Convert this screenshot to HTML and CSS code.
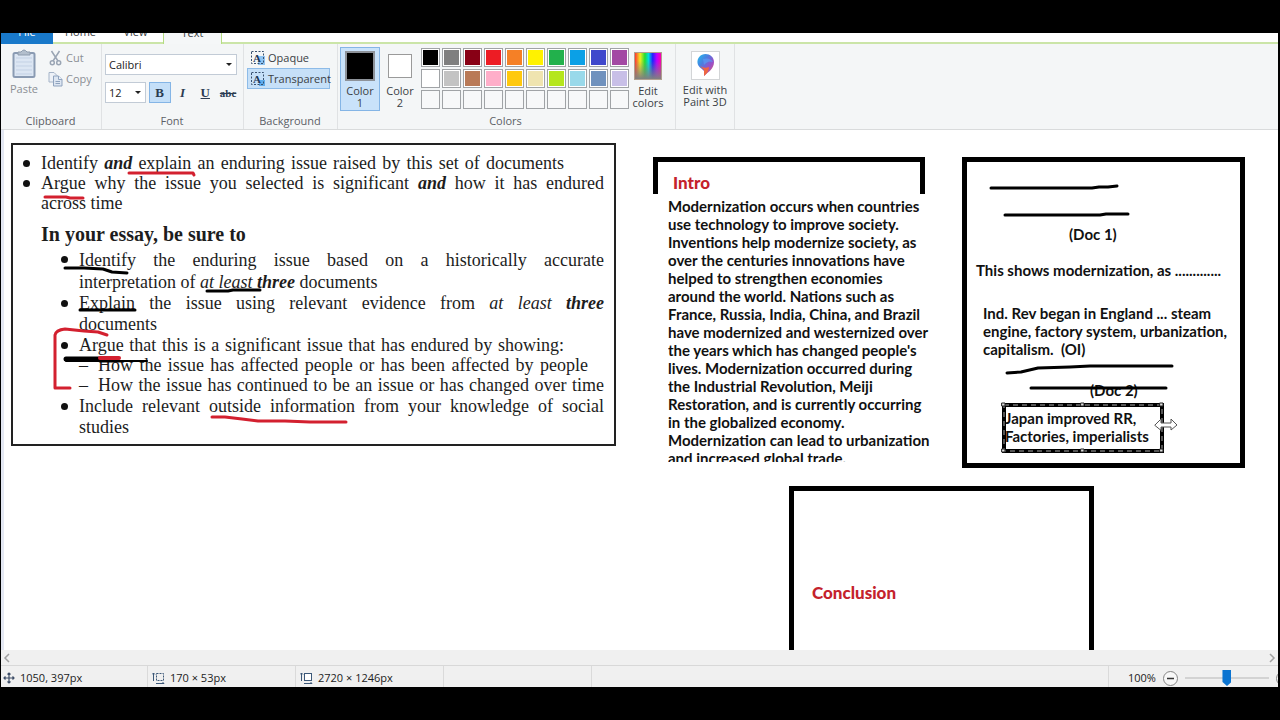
FILE: index.html
```html
<!DOCTYPE html>
<html lang="en">
<head>
<meta charset="utf-8">
<title>Paint</title>
<link rel="stylesheet" href="styles.css">
</head>
<body>
<div class="app">
  <nav class="tabs">
    <button class="tab tab-file">File</button>
    <button class="tab">Home</button>
    <button class="tab">View</button>
    <button class="tab tab-active">Text</button>
    <span class="tab-fill"></span>
  </nav>

  <header class="ribbon">
    <section class="group group-clipboard">
      <div class="group-body">
        <button class="tool tool-paste">
          <svg width="24" height="30" viewBox="0 0 24 30"><rect x="1.500" y="4" width="21" height="24" rx="1.500" fill="#dce6f3" stroke="#8a9bb3" stroke-width="2"/><path d="M4 9H20M4 13H20M4 17H20M4 21H20M4 25H20" stroke="#c3d1e4"/><path d="M6 6V3H9Q12 -1 15 3H18V6Z" fill="#b3bfcd" stroke="#8d9bad"/></svg>
          Paste
        </button>
        <div class="stack">
          <button class="tool tool-line">
            <svg width="12" height="16" viewBox="0 0 12 16" fill="none" stroke="#9aa5b4" stroke-width="1.500"><path d="M2 1L8.500 11M10 1L3.500 11"/><circle cx="2.800" cy="12.700" r="2"/><circle cx="9.200" cy="12.700" r="2"/></svg>
            Cut
          </button>
          <button class="tool tool-line">
            <svg width="15" height="16" viewBox="0 0 15 16" fill="#edf1f7" stroke="#a5b4c8"><path d="M1 1.500H6L9 4.500V11H1Z"/><path d="M5.500 5H10.500L14 8.500V15H5.500Z" fill="#dde6f2" stroke="#8fa3be"/><path d="M10.500 5V8.500H14M7.500 10.500H12M7.500 12.500H12" stroke="#8fa3be"/></svg>
            Copy
          </button>
        </div>
      </div>
      <h2 class="group-name">Clipboard</h2>
    </section>

    <section class="group group-font">
      <div class="group-body group-rows">
        <label class="picker"><select class="select" aria-label="Font family"><option>Calibri</option></select></label>
        <div class="font-row">
          <label class="picker picker-size"><select class="select" aria-label="Font size"><option>12</option></select></label>
          <button class="style-button style-on"><b>B</b></button>
          <button class="style-button"><i>I</i></button>
          <button class="style-button"><u>U</u></button>
          <button class="style-button style-strike"><s>abc</s></button>
        </div>
      </div>
      <h2 class="group-name">Font</h2>
    </section>

    <section class="group group-background">
      <div class="group-body group-rows group-tight">
        <button class="mode">
          <svg width="16" height="16" viewBox="0 0 16 16"><path d="M8 6H15V15H8Z" fill="#8fc4f2"/><rect x="1.500" y="1.500" width="12" height="12" fill="none" stroke="#38516f" stroke-dasharray="2 1.500"/><text x="3" y="12" class="icon-letter">A</text></svg>
          Opaque
        </button>
        <button class="mode mode-on">
          <svg width="16" height="16" viewBox="0 0 16 16"><path d="M9 9H15V15H9Z" fill="#5facec"/><rect x="1.500" y="1.500" width="12" height="12" fill="none" stroke="#38516f" stroke-dasharray="2 1.500"/><text x="3" y="12" class="icon-letter">A</text></svg>
          Transparent
        </button>
      </div>
      <h2 class="group-name">Background</h2>
    </section>

    <section class="group group-colors">
      <div class="group-body group-palette">
        <button class="slot slot-on"><span class="chip chip-large"></span><span>Color<br>1</span></button>
        <button class="slot"><span class="chip chip-small"></span><span>Color<br>2</span></button>
        <div class="palette">
          <button class="swatch" aria-label="Black" style="background-color:#000"></button>
          <button class="swatch" aria-label="Gray" style="background-color:#7f7f7f"></button>
          <button class="swatch" aria-label="Dark red" style="background-color:#880015"></button>
          <button class="swatch" aria-label="Red" style="background-color:#ed1c24"></button>
          <button class="swatch" aria-label="Orange" style="background-color:#f58026"></button>
          <button class="swatch" aria-label="Yellow" style="background-color:#fff200"></button>
          <button class="swatch" aria-label="Green" style="background-color:#22b14c"></button>
          <button class="swatch" aria-label="Turquoise" style="background-color:#0ba0e6"></button>
          <button class="swatch" aria-label="Indigo" style="background-color:#3f48cc"></button>
          <button class="swatch" aria-label="Purple" style="background-color:#a349a4"></button>
          <button class="swatch" aria-label="White" style="background-color:#fff"></button>
          <button class="swatch" aria-label="Light gray" style="background-color:#c3c3c3"></button>
          <button class="swatch" aria-label="Brown" style="background-color:#b97a57"></button>
          <button class="swatch" aria-label="Rose" style="background-color:#ffaec9"></button>
          <button class="swatch" aria-label="Gold" style="background-color:#ffc90e"></button>
          <button class="swatch" aria-label="Light yellow" style="background-color:#efe4b0"></button>
          <button class="swatch" aria-label="Lime" style="background-color:#b5e61d"></button>
          <button class="swatch" aria-label="Light turquoise" style="background-color:#99d9ea"></button>
          <button class="swatch" aria-label="Blue gray" style="background-color:#7092be"></button>
          <button class="swatch" aria-label="Lavender" style="background-color:#c8bfe7"></button>
          <button class="swatch swatch-empty" aria-label="Custom 1"></button>
          <button class="swatch swatch-empty" aria-label="Custom 2"></button>
          <button class="swatch swatch-empty" aria-label="Custom 3"></button>
          <button class="swatch swatch-empty" aria-label="Custom 4"></button>
          <button class="swatch swatch-empty" aria-label="Custom 5"></button>
          <button class="swatch swatch-empty" aria-label="Custom 6"></button>
          <button class="swatch swatch-empty" aria-label="Custom 7"></button>
          <button class="swatch swatch-empty" aria-label="Custom 8"></button>
          <button class="swatch swatch-empty" aria-label="Custom 9"></button>
          <button class="swatch swatch-empty" aria-label="Custom 10"></button>
        </div>
        <button class="slot slot-edit"><span class="rainbow"></span><span>Edit<br>colors</span></button>
      </div>
      <h2 class="group-name">Colors</h2>
    </section>

    <section class="group group-3d">
      <div class="group-body group-palette">
        <button class="slot slot-3d">
          <svg width="29" height="29" viewBox="0 0 29 29">
            <defs><linearGradient id="drop" x1="0" y1="0" x2="1" y2="1"><stop offset="0" stop-color="#1fc0ee"/><stop offset=".35" stop-color="#4a7fe0"/><stop offset=".65" stop-color="#9a4fc9"/><stop offset="1" stop-color="#f06a4a"/></linearGradient></defs>
            <rect x=".5" y=".5" width="28" height="28" fill="#fff" stroke="#d3d5d7"/>
            <path d="M14.500 3C9.500 3 6 7 6.500 12C7 16 10.500 17 13 20V25C17 21 23 18 23 11C23 6 19 3 14.500 3Z" fill="url(#drop)"/>
            <path d="M13 25V19L9 15Q13 18 18 16Q18 21 13 25Z" fill="#ee6742"/>
            <path d="M12 8Q19 6 22 11Q17 9 13 14Z" fill="#5a9bf5" opacity=".7"/>
          </svg>
          <span>Edit with<br>Paint 3D</span>
        </button>
      </div>
    </section>
  </header>

  <main class="canvas">
    <article class="sheet">
      <ul class="list">
        <li><span class="line line-short">Identify <b><i>and</i></b> explain an enduring issue raised by this set of documents</span></li>
        <li><span class="line">Argue why the issue you selected is significant <b><i>and</i></b> how it has endured</span> across time</li>
      </ul>
      <h3 class="sheet-title">In your essay, be sure to</h3>
      <ul class="list list-inner">
        <li class="roomy"><span class="line">Identify the enduring issue based on a historically accurate</span> interpretation of <i>at least</i> <b><i>three</i></b> documents</li>
        <li class="medium"><span class="line">Explain the issue using relevant evidence from <i>at least</i> <b><i>three</i></b></span> documents</li>
        <li><span class="line line-short">Argue that this is a significant issue that has endured by showing:</span>
          <ul class="dashes">
            <li><span class="line line-dash">How the issue has affected people or has been affected by people</span></li>
            <li><span class="line">How the issue has continued to be an issue or has changed over time</span></li>
          </ul>
        </li>
        <li class="medium"><span class="line">Include relevant outside information from your knowledge of social</span> studies</li>
      </ul>
    </article>

    <div class="frame frame-intro"></div>
    <h3 class="red-title intro-title">Intro</h3>
    <p class="note intro-text">Modernization occurs when countries<br>use technology to improve society.<br>Inventions help modernize society, as<br>over the centuries innovations have<br>helped to strengthen economies<br>around the world. Nations such as<br>France, Russia, India, China, and Brazil<br>have modernized and westernized over<br>the years which has changed people's<br>lives. Modernization occurred during<br>the Industrial Revolution, Meiji<br>Restoration, and is currently occurring<br>in the globalized economy.<br>Modernization can lead to urbanization<br>and increased global trade.</p>

    <div class="frame frame-body"></div>
    <p class="note note-doc1">(Doc 1)</p>
    <p class="note note-shows">This shows modernization, as .............</p>
    <p class="note note-rev">Ind. Rev began in England ... steam<br>engine, factory system, urbanization,<br>capitalism.&nbsp; (OI)</p>
    <p class="note note-doc2">(Doc 2)</p>
    <p class="note note-japan">Japan improved RR,<br>Factories, imperialists</p>

    <div class="frame frame-end"></div>
    <h3 class="red-title end-title">Conclusion</h3>

    <svg class="ink" width="1277" height="520" viewBox="1 130 1277 520" fill="none" stroke-linecap="round" stroke-linejoin="round">
      <g stroke="#d3202f" stroke-width="3">
        <path d="M129 173H165L193 173L194 175"/>
        <path d="M45 197H66L70 198H83"/>
        <path d="M107 335L98 332L84 331L65 329Q56 330 55 335V388H70"/>
        <path d="M212 417H225L242 419L258 421H285L310 422H346"/>
      </g>
      <g stroke="#000" stroke-width="3">
        <path d="M65 268H84L103 269L112 272L127 273"/>
        <path d="M207 291H228L233 290H260"/>
        <path d="M80 310H135"/>
        <path d="M66 361H147" stroke-width="2"/>
        <path d="M66 359H99" stroke-width="5"/>
        <path d="M100 361H119" stroke-width="3"/>
        <path d="M100 358H119" stroke="#d3202f" stroke-width="4"/>
        <path d="M991 188H1092L1099 187L1108 187L1117 186"/>
        <path d="M1005 215H1100L1106 214H1128"/>
        <path d="M1007 373L1021 372L1038 368L1070 367L1090 366H1172"/>
        <path d="M1031 388H1166"/>
      </g>
      <rect x="1004" y="405" width="158" height="46" stroke="#000" stroke-width="4" stroke-linejoin="miter"/>
      <rect x="1004" y="405" width="158" height="46" stroke="#aaa" stroke-dasharray="5 4" stroke-linecap="butt"/>
      <g fill="#ddd" stroke="#222"><rect x="1002" y="403" width="3" height="3"/><rect x="1081" y="403" width="3" height="3"/><rect x="1160" y="403" width="3" height="3"/><rect x="1002" y="449" width="3" height="3"/><rect x="1081" y="449" width="3" height="3"/><rect x="1160" y="449" width="3" height="3"/></g>
      <path d="M1155 425L1161 419V423H1171V419L1177 425L1171 430V427H1161V430Z" fill="#fff" stroke="#555"/>
    </svg>
  </main>

  <div class="scrollbar">
    <button class="scroll-button" aria-label="Scroll left"><svg width="8" height="10" viewBox="0 0 8 10" fill="none" stroke="#a0a0a0" stroke-width="1.500"><path d="M6 1L2 5L6 9"/></svg></button>
    <button class="scroll-button" aria-label="Scroll right"><svg width="8" height="10" viewBox="0 0 8 10" fill="none" stroke="#a0a0a0" stroke-width="1.500"><path d="M2 1L6 5L2 9"/></svg></button>
  </div>

  <footer class="status">
    <div class="cell"><svg width="12" height="12" viewBox="0 0 12 12" fill="none" stroke="#3c4c66" stroke-width="1.200"><path d="M6 1V11M1 6H11M4.500 2.500L6 1L7.500 2.500M4.500 9.500L6 11L7.500 9.500M2.500 4.500L1 6L2.500 7.500M9.500 4.500L11 6L9.500 7.500"/></svg>1050, 397px</div>
    <div class="cell"><svg width="13" height="12" viewBox="0 0 13 12" fill="none" stroke="#3c5878"><path d="M1.500 1V9M0 2.500L1.500 1L3 2.500M4 11.500H12M10.500 10L12 11.500L10.500 12"/><rect x="4.500" y="1.500" width="7" height="7" stroke-dasharray="2 1"/></svg>170 × 53px</div>
    <div class="cell"><svg width="13" height="12" viewBox="0 0 13 12" fill="none" stroke="#3c5878"><path d="M1.500 1V9M0 2.500L1.500 1L3 2.500M4 11.500H12M10.500 10L12 11.500L10.500 12"/><rect x="4.500" y="1.500" width="7" height="7" fill="#fff"/></svg>2720 × 1246px</div>
    <div class="cell"></div>
    <div class="cell cell-wide"></div>
    <div class="zoom">
      <label for="zoom">100%</label>
      <button class="round" aria-label="Zoom out"><svg width="15" height="15" viewBox="0 0 15 15" fill="#f8f8f8" stroke="#858585"><circle cx="7.500" cy="7.500" r="7"/><path d="M4 7.500H11" stroke="#333" stroke-width="1.500"/></svg></button>
      <input class="slider" id="zoom" type="range" min="0" max="100" value="50">
      <button class="round" aria-label="Zoom in"><svg width="15" height="15" viewBox="0 0 15 15" fill="#f8f8f8" stroke="#858585"><circle cx="7.500" cy="7.500" r="7"/><path d="M4 7.500H11M7.500 4V11" stroke="#333" stroke-width="1.500"/></svg></button>
    </div>
  </footer>
</div>
</body>
</html>
```
FILE: styles.css
```css
* { box-sizing: border-box; }

body {
  margin: 0;
  height: 100vh;
  padding: 33px 2px 33px 1px;
  background: #000;
  font: 11px/12px "Open Sans", "Noto Sans", sans-serif;
  color: #3b3f45;
}

button {
  margin: 0;
  padding: 0;
  border: 0;
  background: none;
  font: inherit;
  color: inherit;
}

h2, h3, p, ul { margin: 0; padding: 0; }

.app {
  display: flex;
  flex-direction: column;
  height: 100%;
  background: #fff;
  overflow: hidden;
}

/* Tabs */
.tabs {
  display: flex;
  align-items: flex-end;
  flex: none;
  height: 11px;
  overflow: hidden;
}
.tab {
  flex: none;
  width: 55px;
  height: 23px;
  border-bottom: 2px solid #cbe5a8;
}
.tab-file { width: 52px; background: #1979ca; color: #fff; border-color: #1979ca; }
.tab-active {
  width: 59px;
  border: 1px solid #b5dc82;
  border-bottom: 0;
  background: #f5f7f8;
}
.tab-fill { flex: 1; height: 23px; border-bottom: 2px solid #cbe5a8; }

/* Ribbon */
.ribbon {
  display: flex;
  flex: none;
  height: 86px;
  background: #f4f6f7;
  border-bottom: 1px solid #d9dbdc;
}
.group {
  display: flex;
  flex-direction: column;
  flex: none;
  padding: 3px 4px 1px 3px;
  border-right: 1px solid #e0e2e4;
}
.group-clipboard { width: 101px; }
.group-font { width: 142px; }
.group-background { width: 94px; }
.group-colors { width: 338px; padding-left: 2px; }
.group-3d { width: 59px; padding: 3px 0; }
.group-body { display: flex; flex: 1; gap: 4px; }
.group-rows { flex-direction: column; gap: 7px; padding-top: 7px; }
.group-tight { gap: 0; padding-top: 0; }
.group-palette { gap: 0; }
.group-name {
  font-size: 11px;
  font-weight: 400;
  line-height: 14px;
  text-align: center;
  color: #5c6066;
}

.tool { color: #8b8f95; }
.tool-paste {
  display: flex;
  flex-direction: column;
  align-items: center;
  gap: 4px;
  width: 40px;
  padding-top: 2px;
  align-self: flex-start;
}
.stack { display: flex; flex-direction: column; gap: 4px; padding-top: 2px; }
.tool-line { display: flex; align-items: center; gap: 3px; height: 17px; }
.tool-line svg { width: 15px; }

.picker {
  display: flex;
  position: relative;
  width: 132px;
  height: 21px;
}
.picker::after {
  content: "";
  position: absolute;
  top: 9px;
  right: 5px;
  border: 3px solid transparent;
  border-top-color: #222;
  pointer-events: none;
}
.picker-size { width: 41px; }
.select {
  appearance: none;
  width: 100%;
  padding: 0 3px;
  border: 1px solid #c2cbd6;
  border-radius: 0;
  background: #fff;
  font: inherit;
  color: #222;
}
.font-row { display: flex; gap: 1px; }
.style-button {
  width: 22px;
  height: 21px;
  font: 700 13px/18px "Liberation Serif", serif;
  color: #2b3c52;
}
.picker-size + .style-button { margin-left: 2px; }
.style-on { background: #c4dff8; border: 1px solid #84b5e6; }
.style-strike { font-size: 11px; }

.mode {
  display: flex;
  align-items: center;
  gap: 2px;
  width: 83px;
  height: 21px;
  padding: 0 2px;
  border: 1px solid transparent;
  white-space: nowrap;
}
.mode svg { flex: none; }
.mode-on { background: #c6e0f8; border-color: #8dbbe8; }
.icon-letter { font: 700 11px "Liberation Serif", serif; fill: #1c3859; }

.slot {
  display: flex;
  flex-direction: column;
  align-items: center;
  gap: 4px;
  width: 40px;
  height: 64px;
  padding-top: 3px;
  border: 1px solid transparent;
}
.slot-on { background: #c9e2fa; border-color: #84b5e6; }
.chip { border: 1px solid #9a9a9a; }
.chip-large { width: 30px; height: 30px; background: #000; border: 2px solid #8d9299; }
.chip-small { width: 24px; height: 24px; margin: 3px 0; background: #fff; }
.palette {
  display: grid;
  grid-template-columns: repeat(10, 19px);
  grid-auto-rows: 19px;
  gap: 2px;
  align-self: flex-start;
  padding: 1px 0 0 1px;
  width: 208px;
}
.swatch {
  padding: 1px;
  border: 1px solid #a0a3a6;
  box-shadow: inset 0 0 0 1px #fff;
}
.swatch-empty { background: #f7f8f9; box-shadow: none; }
.rainbow {
  width: 28px;
  height: 28px;
  margin: 1px 0;
  border: 1px solid #b0a090;
  background:
    linear-gradient(transparent 30%, #808080),
    linear-gradient(90deg, #f33, #ee2 20%, #2d3 38%, #0dd 52%, #22f 68%, #b0f 84%, #f0a);
}
.slot-3d { width: 58px; }

/* Drawing surface */
.canvas {
  position: relative;
  flex: 1;
  min-height: 0;
  overflow: hidden;
  background: #fff;
  border-left: 3px solid #e4e8f3;
}
.canvas > * { position: absolute; }

.sheet {
  left: 7px;
  top: 13px;
  width: 605px;
  padding: 8px 10px 6px 28px;
  border: 2px solid #222;
  font: 18px/20px "Liberation Serif", serif;
  color: #1d1d1d;
}
.list { list-style: none; }
.list > li { position: relative; }
.list > li::before {
  content: "";
  position: absolute;
  left: -18px;
  top: 7px;
  width: 7px;
  height: 7px;
  border-radius: 50%;
  background: #111;
}
.line { display: block; text-align: justify; text-align-last: justify; }
.line-short { padding-right: 40px; }
.line-dash { padding-right: 16px; }
.list-inner { padding-left: 38px; }
.roomy { line-height: 22px; }
.medium { line-height: 21px; }
.sheet-title { margin: 10px 0 4px; font-size: 20px; line-height: 22px; }
.dashes { list-style: none; padding-bottom: 1px; }
.dashes li { padding-left: 19px; position: relative; }
.dashes li::before { content: "–"; position: absolute; left: 0; }

.frame { border: 5px solid #000; }
.frame-intro { left: 649px; top: 27px; width: 272px; height: 37px; border-bottom: 0; }
.frame-body { left: 958px; top: 27px; width: 283px; height: 311px; }
.frame-end { left: 785px; top: 356px; width: 305px; height: 200px; }

.red-title { font: 900 17px/20px Lato, sans-serif; color: #c4222c; }
.intro-title { left: 669px; top: 43px; }
.end-title { left: 808px; top: 453px; }

.note {
  font: 700 15px/18px Lato, sans-serif;
  color: #111;
  white-space: nowrap;
}
.intro-text { left: 664px; top: 67px; height: 265px; overflow: hidden; }
.note-doc1 { left: 1065px; top: 95px; }
.note-shows { left: 972px; top: 131px; }
.note-rev { left: 979px; top: 174px; }
.note-doc2 { left: 1086px; top: 251px; }
.note-japan { left: 1001px; top: 279px; }
.ink { left: -3px; top: 0; }

/* Scrollbar and status bar */
.scrollbar {
  display: flex;
  justify-content: space-between;
  flex: none;
  height: 15px;
  padding: 0 2px;
  background: #f0f0f0;
}
.scroll-button { display: flex; align-items: center; }
.status {
  display: flex;
  flex: none;
  height: 22px;
  border-top: 1px solid #d8d8d8;
  background: #f0f0f0;
  color: #222;
}
.cell {
  display: flex;
  align-items: center;
  gap: 5px;
  flex: none;
  width: 147px;
  padding: 3px 0 0 2px;
  border-right: 1px solid #dadada;
}
.cell + .cell { width: 148px; padding-left: 4px; }
.cell + .cell-wide { flex: 1; }
.zoom {
  display: flex;
  align-items: center;
  gap: 7px;
  flex: none;
  width: 169px;
  padding: 3px 0 0 19px;
  overflow: hidden;
}
.round { display: flex; flex: none; }
.slider {
  appearance: none;
  flex: none;
  width: 84px;
  height: 17px;
  margin: 0;
  background: linear-gradient(#d3d3d3, #d3d3d3) center / 100% 2px no-repeat;
}
.slider::-webkit-slider-thumb {
  appearance: none;
  width: 9px;
  height: 16px;
  background: #0b74d1;
  clip-path: polygon(0 0, 100% 0, 100% 75%, 50% 100%, 0 75%);
}
```
